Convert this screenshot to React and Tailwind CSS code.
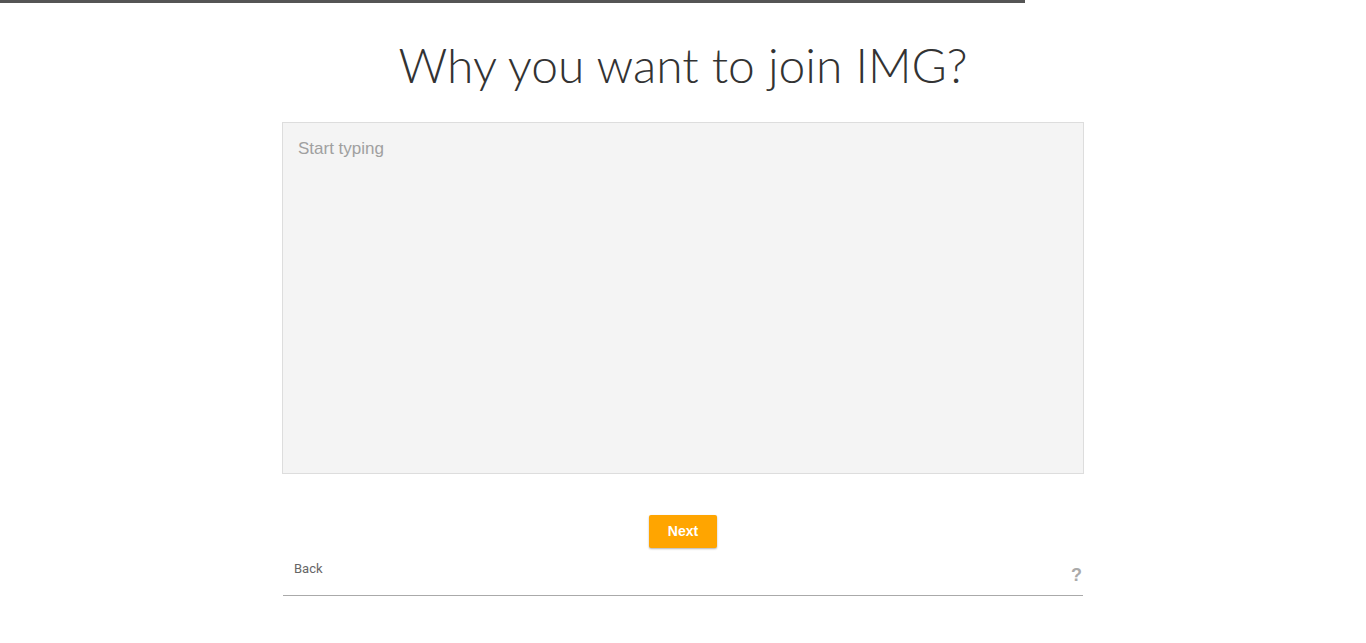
import React from 'react';

export default function App() {
  return (
    <div className="min-h-screen bg-white font-['Liberation_Sans',Arial,sans-serif]">
      <div className="h-[3px] w-[1025px] bg-[#555555]" />
      <div className="mx-auto flex w-[802px] flex-col items-center">
        <h1 className="mt-[31px] font-['Lato',sans-serif] text-[48px] font-light leading-[62px] text-[#333333]">
          Why you want to join IMG?
        </h1>
        <textarea
          placeholder="Start typing"
          className="mt-[26px] h-[352px] w-[802px] resize-none border border-[#dddddd] bg-[#f4f4f4] px-[15px] pb-[15px] pt-[13px] text-[17px] text-[#333] outline-none placeholder:text-[#a0a0a0]"
        />
        <button className="mt-[41px] h-[33px] w-[68px] rounded-[2px] bg-[#ffa500] text-[14px] font-bold text-white shadow-[0_1px_2px_rgba(0,0,0,0.3)]">
          Next
        </button>
        <div className="mt-[11px] flex h-[37px] w-[800px] items-start justify-between border-b border-[#aaaaaa]">
          <span className="ml-[11px] font-['Roboto',sans-serif] text-[13px] text-[#666666]">Back</span>
          <span className="mr-[1px] mt-[3px] font-['Liberation_Sans',sans-serif] text-[18px] font-bold text-[#aaaaaa]">?</span>
        </div>
      </div>
    </div>
  );
}
